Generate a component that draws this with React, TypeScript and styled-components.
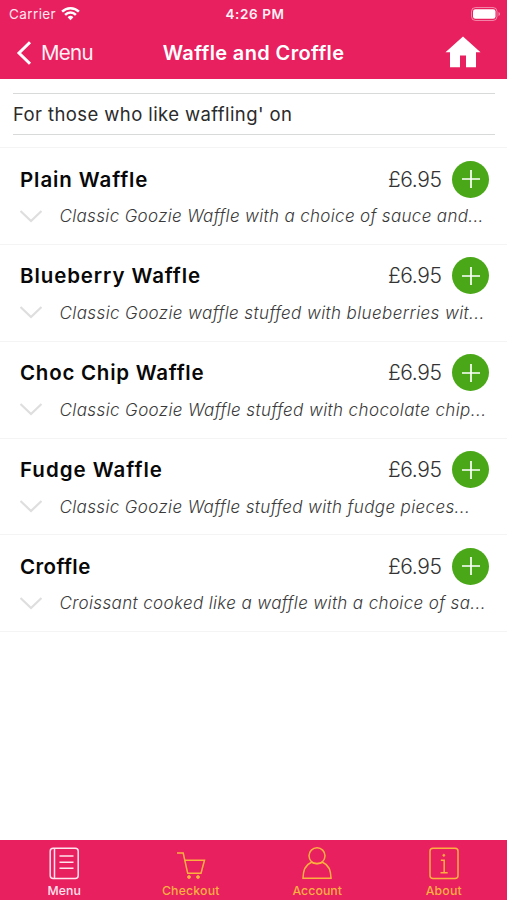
import React from "react";
import styled, { createGlobalStyle } from "styled-components";

const PINK = "#e8205f";
const GOLD = "#fbb03f";

const GlobalStyle = createGlobalStyle`
  * { box-sizing: border-box; }
  body { margin: 0; background: #fff; font-family: Inter, "Open Sans", sans-serif; }
`;

const Screen = styled.div`
  width: 100%;
  height: 100vh;
  display: flex;
  flex-direction: column;
  background: #fff;
  overflow: hidden;
`;

const Label = styled.span<{ $track?: number }>`
  white-space: nowrap;
  letter-spacing: ${(p) => p.$track ?? 0}px;
`;

const Header = styled.header`
  height: 79px;
  flex: none;
  background: ${PINK};
  color: #fff;
`;

const StatusBar = styled.div`
  height: 27px;
  padding: 0 6px 0 9px;
  display: grid;
  grid-template-columns: 1fr auto 1fr;
  align-items: center;
  font-size: 13.5px;
`;

const Carrier = styled.div`
  display: flex;
  align-items: center;
  gap: 5px;
  color: #ffe6ef;
`;

const Clock = styled(Label)`
  font-weight: 600;
  color: #fff0f5;
`;

const BatterySvg = styled.svg`
  justify-self: end;
`;

const NavBar = styled.nav`
  height: 51px;
  padding: 0 16px;
  display: grid;
  grid-template-columns: 1fr auto 1fr;
  align-items: center;
`;

const Back = styled.a`
  display: flex;
  align-items: center;
  gap: 9px;
  font-size: 20.5px;
  color: #fff0f5;
`;

const Title = styled.h1`
  margin: 0;
  font-size: 20px;
  font-weight: 600;
  line-height: 26px;
`;

const HomeSvg = styled.svg`
  justify-self: end;
  margin: 0 10px 2px 0;
`;

const Intro = styled.section`
  flex: none;
  height: 69px;
  padding: 14px 12px 13px 13px;
  border-bottom: 1px solid #f4f4f4;
`;

const IntroText = styled.p`
  margin: 0;
  height: 42px;
  display: flex;
  align-items: center;
  border-top: 1px solid #d8dada;
  border-bottom: 1px solid #d8dada;
  font-size: 18.5px;
  color: #2b2b2b;
`;

const List = styled.ul`
  flex: 1;
  margin: 0;
  padding: 0;
  list-style: none;
`;

const Item = styled.li`
  height: 96.85px;
  padding: 13px 18px 0 20px;
  border-bottom: 1px solid #f4f4f4;
`;

const ItemTop = styled.div`
  height: 36px;
  display: flex;
  align-items: center;
`;

const ItemName = styled(Label)`
  flex: 1;
  font-size: 20.5px;
  font-weight: 600;
  color: #080808;
`;

const Price = styled(Label)`
  width: 54px;
  margin: 0 10px 0 -1px;
  font-size: 21px;
  font-weight: 300;
  color: #333;
`;

const AddButton = styled.button`
  width: 37px;
  height: 37px;
  padding: 0;
  border: 0;
  border-radius: 50%;
  background: #4aa818;
  display: grid;
  place-items: center;
`;

const ItemDetail = styled.div`
  height: 38px;
  display: flex;
  align-items: center;
  gap: 17.5px;
`;

const Description = styled(Label)`
  font-size: 17px;
  font-style: italic;
  font-weight: 300;
  color: #3a3a3a;
`;

const TabBar = styled.footer`
  height: 60px;
  flex: none;
  display: grid;
  grid-template-columns: repeat(4, 1fr);
  padding: 0 0 0 1px;
  background: ${PINK};
`;

const Tab = styled.a<{ $active?: boolean }>`
  display: flex;
  flex-direction: column;
  align-items: center;
  padding-top: 7px;
  gap: 3px;
  font-size: 12.25px;
  line-height: 16px;
  font-weight: 500;
  color: ${(p) => (p.$active ? "#ffe3ed" : GOLD)};
`;

const WifiIcon = () => (
  <svg width="19" height="15" viewBox="0 0 19 15" fill="none" stroke="#fff" strokeWidth="2.5">
    <path d="M1.1 5.7a12 12 0 0 1 16.8 0M4.1 8.8a7.6 7.6 0 0 1 10.8 0" />
    <path d="M9.5 14.2 6.6 11.3a4.1 4.1 0 0 1 5.8 0z" fill="#fff" stroke="none" />
  </svg>
);

const Battery = () => (
  <BatterySvg width="31" height="16" viewBox="0 0 31 16">
    <rect x="1.5" y="1.5" width="25.5" height="13" rx="4" fill="none" stroke="#fff" strokeOpacity=".45" />
    <rect x="3" y="3.2" width="22.5" height="9.6" rx="2.4" fill="#fff" />
    <path d="M28.5 6v4q1.5-.5 1.5-2t-1.5-2z" fill="#fff" fillOpacity=".5" />
  </BatterySvg>
);

const BackIcon = () => (
  <svg width="16" height="24" viewBox="0 0 16 24" fill="none" stroke="#fff" strokeWidth="3">
    <path d="M14 1.2 3 12l11 10.8" />
  </svg>
);

const HomeIcon = () => (
  <HomeSvg width="36" height="32" viewBox="0 0 36 32" fill="#fff">
    <path d="M18 .5 35.5 16.2H31V31.300H21V19.400h-6V31.300H5V16.200H.5z" />
  </HomeSvg>
);

const ChevronIcon = () => (
  <svg width="22" height="13" viewBox="0 0 22 13" fill="none" stroke="#dedede" strokeWidth="2.200">
    <path d="M.5 1 11 11 21.500 1" />
  </svg>
);

const PlusIcon = () => (
  <svg width="18" height="18" viewBox="0 0 18 18" stroke="#fff" strokeWidth="1.700">
    <path d="M9 0v18M0 9h18" />
  </svg>
);

const tabIcons: Record<string, React.ReactNode> = {
  menu: (
    <>
      <rect x="2.200" y="1.200" width="28" height="30.300" rx="3" />
      <path d="M6.500 1.200v30.300M11.500 9h14M11.500 15.200h14M11.500 21.300h14" />
    </>
  ),
  cart: (
    <>
      <path d="M2 6h6.200l4.500 20.300h13.300L29.500 13.300H10" />
      <circle cx="14" cy="30" r="1.500" fill="currentColor" strokeWidth=".8" />
      <circle cx="23" cy="30" r="1.500" fill="currentColor" strokeWidth=".8" />
    </>
  ),
  account: (
    <>
      <circle cx="16" cy="8.800" r="8" />
      <path d="M10.500 15.200C5 17.500 2 22 2 31.300h28c0-9.300-3-13.800-8.500-16.100Q16 17.800 10.500 15.200" />
    </>
  ),
  about: (
    <>
      <rect x="2" y="1.200" width="28" height="30.300" rx="3" />
      <path d="M12.800 13.300h3.400v12.500M12.500 25.800h7.200" />
      <circle cx="15.800" cy="8.300" r="1.100" fill="currentColor" strokeWidth=".6" />
    </>
  ),
};

const TabIcon = ({ name }: { name: string }) => (
  <svg width="32" height="33" viewBox="0 0 32 33" fill="none" stroke="currentColor" strokeWidth="1.500">
    {tabIcons[name]}
  </svg>
);

const items = [
  { name: "Plain Waffle", track: 0.9, text: "Classic Goozie Waffle with a choice of sauce and...", textTrack: 0.34 },
  { name: "Blueberry Waffle", track: 0.9, text: "Classic Goozie waffle stuffed with blueberries wit...", textTrack: 0.4 },
  { name: "Choc Chip Waffle", track: 0.75, text: "Classic Goozie Waffle stuffed with chocolate chip...", textTrack: 0.4 },
  { name: "Fudge Waffle", track: 1, text: "Classic Goozie Waffle stuffed with fudge pieces...", textTrack: 0.37 },
  { name: "Croffle", track: 0.4, text: "Croissant cooked like a waffle with a choice of sa...", textTrack: 0.37 },
];

const tabs = [
  { icon: "menu", label: "Menu", track: 0.1, active: true },
  { icon: "cart", label: "Checkout", track: 0.2 },
  { icon: "account", label: "Account", track: 0.1 },
  { icon: "about", label: "About", track: 0.2 },
];

export default function App() {
  return (
    <Screen>
      <GlobalStyle />
      <Header>
        <StatusBar>
          <Carrier>
            <Label $track={0.4}>Carrier</Label>
            <WifiIcon />
          </Carrier>
          <Clock $track={0.6}>4:26 PM</Clock>
          <Battery />
        </StatusBar>
        <NavBar>
          <Back>
            <BackIcon />
            <Label $track={-0.7}>Menu</Label>
          </Back>
          <Title>
            <Label $track={0.37}>Waffle and Croffle</Label>
          </Title>
          <HomeIcon />
        </NavBar>
      </Header>
      <Intro>
        <IntroText>
          <Label $track={0.4}>For those who like waffling' on</Label>
        </IntroText>
      </Intro>
      <List>
        {items.map((item) => (
          <Item key={item.name}>
            <ItemTop>
              <ItemName $track={item.track}>{item.name}</ItemName>
              <Price $track={-0.4}>£6.95</Price>
              <AddButton aria-label={`Add ${item.name}`}>
                <PlusIcon />
              </AddButton>
            </ItemTop>
            <ItemDetail>
              <ChevronIcon />
              <Description $track={item.textTrack}>{item.text}</Description>
            </ItemDetail>
          </Item>
        ))}
      </List>
      <TabBar>
        {tabs.map((tab) => (
          <Tab key={tab.label} $active={tab.active}>
            <TabIcon name={tab.icon} />
            <Label $track={tab.track}>{tab.label}</Label>
          </Tab>
        ))}
      </TabBar>
    </Screen>
  );
}
